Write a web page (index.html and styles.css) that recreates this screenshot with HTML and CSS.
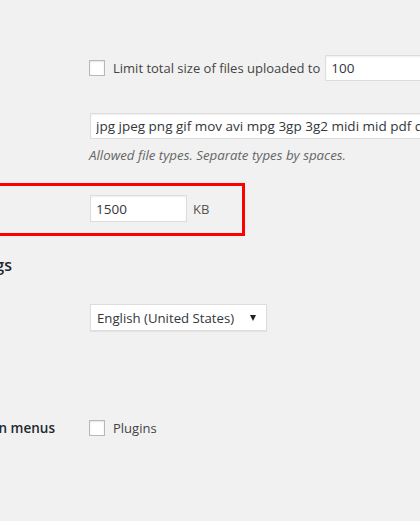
FILE: index.html
```html
<!DOCTYPE html>
<html>
<head>
<meta charset="utf-8">
<link rel="stylesheet" href="styles.css">
</head>
<body>
<div class="wrap">
  <div class="row r1">
    <div class="th"></div>
    <div class="td">
      <label class="check"><input type="checkbox" class="cb"><span>Limit total size of files uploaded to</span></label>
      <input type="text" class="text quota" value="100">
    </div>
  </div>
  <div class="row r2">
    <div class="th"></div>
    <div class="td col">
      <input type="text" class="text wide" value="jpg jpeg png gif mov avi mpg 3gp 3g2 midi mid pdf doc ppt odt pptx docx pps ppsx xls xlsx key mp3 ogg flac m4a wav mp4 m4v webm ogv flv">
      <p class="desc">Allowed file types. Separate types by spaces.</p>
    </div>
  </div>
  <div class="hl">
    <div class="row r3">
      <div class="th"><span>Max upload file size</span></div>
      <div class="td">
        <input type="text" class="text small" value="1500"><span class="unit">KB</span>
      </div>
    </div>
  </div>
  <div class="heading"><h2>Language Settings</h2></div>
  <div class="row r4">
    <div class="th"></div>
    <div class="td">
      <div class="select"><span>English (United States)</span><i class="arrow"></i></div>
    </div>
  </div>
  <div class="row r5">
    <div class="th"><span>Enable administration menus</span></div>
    <div class="td">
      <label class="check"><input type="checkbox" class="cb"><span>Plugins</span></label>
    </div>
  </div>
</div>
</body>
</html>
```
FILE: styles.css
```css
html, body {
  margin: 0;
  padding: 0;
  background: #f1f1f1;
  overflow: hidden;
}
body {
  width: 420px;
  height: 521px;
  font-family: "Open Sans", "Noto Sans", sans-serif;
  font-size: 13px;
  color: #444;
}
.wrap {
  padding-top: 55px;
}
.row {
  display: flex;
  align-items: flex-start;
}
.th {
  width: 90px;
  flex: none;
  display: flex;
  justify-content: flex-end;
  white-space: nowrap;
  font-weight: 600;
  color: #23282d;
  font-size: 13.5px;
  padding-right: 35px;
  box-sizing: border-box;
}
.td {
  display: flex;
  align-items: center;
  white-space: nowrap;
}
.td.col {
  flex-direction: column;
  align-items: flex-start;
}
.check {
  display: flex;
  align-items: center;
}
.cb {
  appearance: none;
  -webkit-appearance: none;
  width: 16px;
  height: 16px;
  margin: 0 8px 0 -1px;
  border: 1px solid #b4b9be;
  background: #fff;
  box-shadow: inset 0 1px 2px rgba(0,0,0,0.1);
  box-sizing: border-box;
}
.text {
  font-family: inherit;
  font-size: 13.5px;
  color: #32373c;
  height: 26px;
  box-sizing: border-box;
  border: 1px solid #ddd;
  background: #fff;
  box-shadow: inset 0 1px 2px rgba(0,0,0,0.07);
  padding: 0 5px;
  margin: 0;
  outline: none;
}
.quota {
  margin-left: 5px;
  width: 140px;
}
.r2 {
  margin-top: 32px;
}
.wide {
  width: 400px;
}
.desc {
  margin: 6px 0 0 -1px;
  font-style: italic;
  color: #666;
  font-size: 13.3px;
  line-height: 20px;
}
.hl {
  margin-top: 18px;
  margin-left: -20px;
  width: 265px;
  height: 53px;
  box-sizing: border-box;
  border: 3px solid #ff0000;
  padding: 9px 0 0 17px;
}
.hl .th {
  visibility: hidden;
}
.small {
  width: 97px;
  height: 27px;
}
.unit {
  margin-left: 6px;
  color: #555;
}
.heading {
  margin-top: 18px;
  margin-left: -200px;
}
.heading h2 {
  margin: 0;
  width: 212px;
  display: flex;
  justify-content: flex-end;
  white-space: nowrap;
  font-size: 16px;
  font-weight: 600;
  color: #23282d;
  line-height: 22px;
}
.r4 {
  margin-top: 28px;
}
.select {
  width: 177px;
  height: 27px;
  box-sizing: border-box;
  border: 1px solid #ddd;
  background: #fff;
  box-shadow: 0 1px 1px rgba(0,0,0,0.05);
  display: flex;
  align-items: center;
  justify-content: space-between;
  padding: 0 10px 0 6px;
  color: #32373c;
  font-size: 13.2px;
}
.arrow {
  width: 0;
  height: 0;
  border-left: 3.5px solid transparent;
  border-right: 3.5px solid transparent;
  border-top: 6px solid #222;
}
.r5 {
  margin-top: 88px;
  align-items: center;
}
```
